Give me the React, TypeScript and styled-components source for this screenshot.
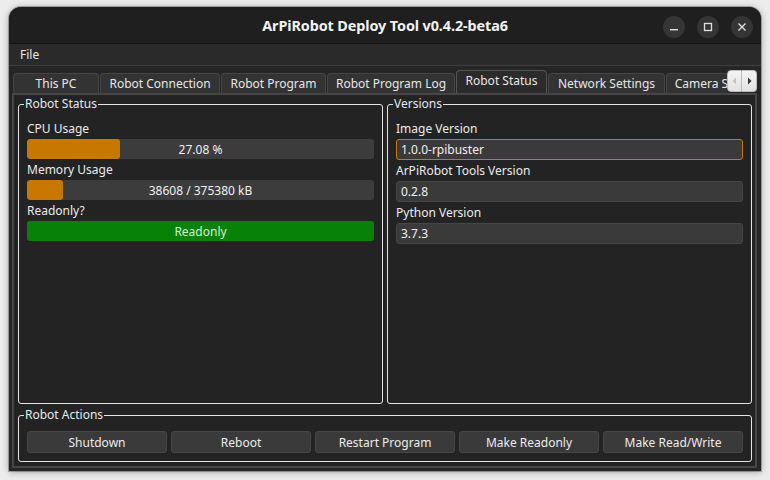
import React from "react";
import styled, { createGlobalStyle } from "styled-components";

const Global = createGlobalStyle`
  html, body { margin: 0; padding: 0; background: #ececec; }
  body { font-family: "Noto Sans", "Open Sans", sans-serif; }
  * { box-sizing: border-box; }
`;

const Page = styled.div`
  width: 770px;
  height: 480px;
  padding: 7px 9px 9px 9px;
`;

const Window = styled.div`
  width: 752px;
  height: 464px;
  background: #262626;
  border-radius: 12px 12px 0 0;
  box-shadow: 0 1px 7px rgba(0, 0, 0, 0.35), 0 0 0 1px rgba(0, 0, 0, 0.25);
  display: flex;
  flex-direction: column;
  overflow: hidden;
  color: #e8e8e8;
`;

const TitleBar = styled.div`
  height: 37px;
  flex: none;
  background: #1f1f1f;
  border-bottom: 1px solid #141414;
  display: flex;
  align-items: center;
  justify-content: center;
  position: relative;
`;

const Title = styled.div`
  font-size: 14.4px;
  font-weight: 700;
  color: #f2f2f2;
  letter-spacing: -0.1px;
`;

const WinControls = styled.div`
  position: absolute;
  right: 8px;
  top: 9px;
  display: flex;
  gap: 12px;
`;

const WinBtn = styled.div`
  width: 22px;
  height: 22px;
  border-radius: 50%;
  background: #353535;
  display: flex;
  align-items: center;
  justify-content: center;
`;

const MenuBar = styled.div`
  height: 22px;
  flex: none;
  background: #2a2a2a;
  border-bottom: 1px solid #3f3f3f;
  display: flex;
  align-items: center;
  padding-left: 11px;
  font-size: 12px;
`;

const Body = styled.div`
  flex: 1;
  display: flex;
  flex-direction: column;
  padding: 4px 4px 3px 3px;
`;

const TabBar = styled.div`
  height: 23px;
  flex: none;
  display: flex;
  align-items: flex-end;
  padding-left: 1px;
`;

const TabStrip = styled.div`
  flex: 1;
  display: flex;
  align-items: flex-end;
  gap: 1px;
  overflow: hidden;
  height: 100%;
`;

const Tab = styled.div<{ $active?: boolean; $w: number }>`
  flex: none;
  width: ${(p) => p.$w}px;
  height: ${(p) => (p.$active ? 23 : 20)}px;
  background: ${(p) => (p.$active ? "#2b2b2b" : "#333333")};
  border: 1px solid ${(p) => (p.$active ? "#555" : "#454545")};
  border-bottom: none;
  border-radius: 4px 4px 0 0;
  font-size: 12px;
  color: #e6e6e6;
  display: flex;
  align-items: center;
  justify-content: center;
  padding-bottom: ${(p) => (p.$active ? 3 : 0)}px;
  white-space: nowrap;
  overflow: hidden;
`;

const ScrollBtns = styled.div`
  flex: none;
  display: flex;
  height: 22px;
  align-self: flex-start;
`;

const ScrollBtn = styled.div`
  width: 15px;
  height: 22px;
  background: linear-gradient(#f4f4f4, #e2e2e2);
  border: 1px solid #bdbdbd;
  display: flex;
  align-items: center;
  justify-content: center;
  &:first-child { border-radius: 4px 0 0 4px; }
  &:last-child { border-radius: 0 4px 4px 0; border-left: none; }
`;

const TabPane = styled.div`
  flex: 1;
  border: 2px solid #464646;
  background: #232323;
  display: flex;
  flex-direction: column;
  padding: 2px 3px 4px 4px;
`;

const TopRow = styled.div`
  flex: 1;
  display: flex;
  gap: 4px;
`;

const Group = styled.fieldset`
  flex: 1;
  margin: 0;
  border: 1px solid #e4e4e4;
  border-radius: 3px;
  padding: 7px 8px 8px 8px;
  min-width: 0;
  display: flex;
  flex-direction: column;
`;

const Legend = styled.legend`
  font-size: 12px;
  color: #e3e8ef;
  padding: 0 1px;
  margin-left: -3px;
  line-height: 14px;
`;

const Label = styled.div`
  font-size: 12px;
  height: 21px;
  line-height: 21px;
  color: #ececec;
`;

const Bar = styled.div`
  height: 20px;
  border-radius: 3px;
  background: #3c3c3c;
  position: relative;
  overflow: hidden;
  display: flex;
  align-items: center;
  justify-content: center;
  font-size: 12px;
  color: #f0f0f0;
`;

const Fill = styled.div`
  position: absolute;
  left: 0;
  top: 0;
  bottom: 0;
  background: #c87800;
  border-radius: 3px;
`;

const BarText = styled.span`
  position: relative;
`;

const StatusBar = styled.div`
  height: 20px;
  border-radius: 3px;
  background: #078207;
  color: #d0f2d0;
  font-size: 12px;
  display: flex;
  align-items: center;
  justify-content: center;
`;

const Field = styled.div<{ $focus?: boolean }>`
  height: 21px;
  border-radius: 3px;
  background: #3a3a3a;
  border: 1px solid ${(p) => (p.$focus ? "#c87800" : "#464646")};
  font-size: 12px;
  color: #f0f0f0;
  display: flex;
  align-items: center;
  padding-left: 4px;
`;

const ActionsGroup = styled(Group)`
  flex: none;
  margin-top: 4px;
  padding: 9px 8px 8px 8px;
`;

const ButtonRow = styled.div`
  display: flex;
  gap: 4px;
`;

const Button = styled.div`
  flex: 1;
  height: 22px;
  border-radius: 3px;
  background: #3a3a3a;
  border: 1px solid #474747;
  font-size: 12px;
  color: #ececec;
  display: flex;
  align-items: center;
  justify-content: center;
`;

const tabs: [string, number, boolean?][] = [
  ["This PC", 86],
  ["Robot Connection", 120],
  ["Robot Program", 105],
  ["Robot Program Log", 128],
  ["Robot Status", 91, true],
  ["Network Settings", 117],
  ["Camera Settings", 110],
];

export default function App() {
  return (
    <>
      <Global />
      <Page>
        <Window>
          <TitleBar>
            <Title>ArPiRobot Deploy Tool v0.4.2-beta6</Title>
            <WinControls>
              <WinBtn>
                <svg width="10" height="10" viewBox="0 0 10 10">
                  <rect x="1" y="7" width="8" height="1.4" fill="#e0e0e0" />
                </svg>
              </WinBtn>
              <WinBtn>
                <svg width="10" height="10" viewBox="0 0 10 10">
                  <rect x="1.5" y="1.5" width="7" height="7" fill="none" stroke="#e0e0e0" strokeWidth="1.3" />
                </svg>
              </WinBtn>
              <WinBtn>
                <svg width="10" height="10" viewBox="0 0 10 10">
                  <path d="M1.5 1.5 L8.5 8.5 M8.5 1.5 L1.5 8.5" stroke="#e0e0e0" strokeWidth="1.4" />
                </svg>
              </WinBtn>
            </WinControls>
          </TitleBar>
          <MenuBar>File</MenuBar>
          <Body>
            <TabBar>
              <TabStrip>
                {tabs.map(([t, w, a]) => (
                  <Tab key={t} $w={w} $active={a}>
                    {t}
                  </Tab>
                ))}
              </TabStrip>
              <ScrollBtns>
                <ScrollBtn>
                  <svg width="5" height="8" viewBox="0 0 5 8">
                    <path d="M4 0.5 L0.5 4 L4 7.5 Z" fill="#c4c4c4" />
                  </svg>
                </ScrollBtn>
                <ScrollBtn>
                  <svg width="5" height="8" viewBox="0 0 5 8">
                    <path d="M1 0.5 L4.5 4 L1 7.5 Z" fill="#333" />
                  </svg>
                </ScrollBtn>
              </ScrollBtns>
            </TabBar>
            <TabPane>
              <TopRow>
                <Group>
                  <Legend>Robot Status</Legend>
                  <Label>CPU Usage</Label>
                  <Bar>
                    <Fill style={{ width: "26.7%" }} />
                    <BarText>27.08 %</BarText>
                  </Bar>
                  <Label>Memory Usage</Label>
                  <Bar>
                    <Fill style={{ width: "10.3%" }} />
                    <BarText>38608 / 375380 kB</BarText>
                  </Bar>
                  <Label>Readonly?</Label>
                  <StatusBar>Readonly</StatusBar>
                </Group>
                <Group>
                  <Legend>Versions</Legend>
                  <Label>Image Version</Label>
                  <Field $focus>1.0.0-rpibuster</Field>
                  <Label>ArPiRobot Tools Version</Label>
                  <Field>0.2.8</Field>
                  <Label>Python Version</Label>
                  <Field>3.7.3</Field>
                </Group>
              </TopRow>
              <ActionsGroup>
                <Legend>Robot Actions</Legend>
                <ButtonRow>
                  <Button>Shutdown</Button>
                  <Button>Reboot</Button>
                  <Button>Restart Program</Button>
                  <Button>Make Readonly</Button>
                  <Button>Make Read/Write</Button>
                </ButtonRow>
              </ActionsGroup>
            </TabPane>
          </Body>
        </Window>
      </Page>
    </>
  );
}
